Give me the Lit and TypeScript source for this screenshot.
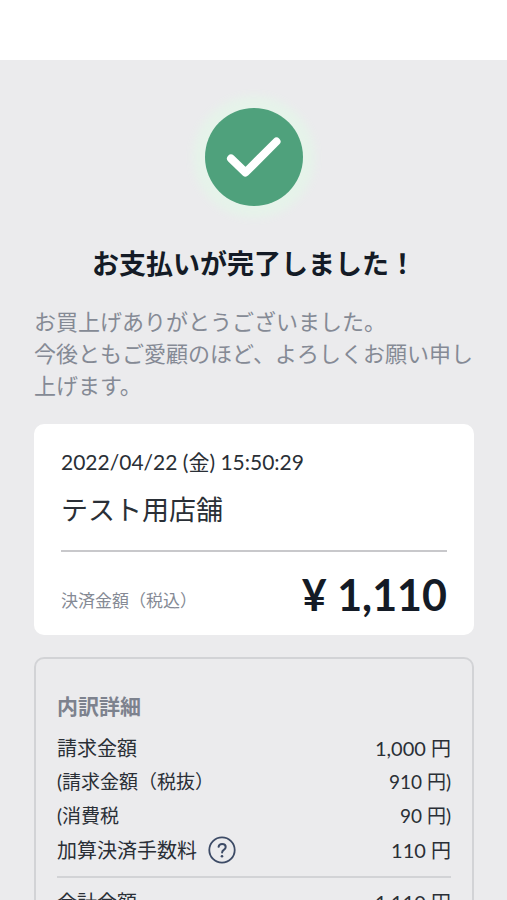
import { LitElement, html, css } from "lit";
import { customElement } from "lit/decorators.js";
import { classMap } from "lit/directives/class-map.js";

interface Line {
  label: string;
  value: string;
  sub?: boolean;
  help?: boolean;
}

const ITEMS: Line[] = [
  { label: "請求金額", value: "1,000 円" },
  { label: "(請求金額（税抜）", value: "910 円)", sub: true },
  { label: "(消費税", value: "90 円)", sub: true },
  { label: "加算決済手数料", value: "110 円", help: true },
];

const TOTAL: Line = { label: "合計金額", value: "1,110 円" };

@customElement("app-root")
export class AppRoot extends LitElement {
  static styles = css`
    :host {
      display: block;
      min-height: 100vh;
      background: #ebebed;
      color: #2a2f36;
      font-family: Lato, "Noto Sans CJK JP", sans-serif;
    }
    * {
      box-sizing: border-box;
    }
    .topbar {
      height: 60px;
      background: #ffffff;
    }
    main {
      display: flex;
      flex-direction: column;
      padding: 48px 33px 48px 34px;
    }
    .badge {
      align-self: center;
      display: block;
      width: 98px;
      height: 98px;
      border-radius: 50%;
      background: #4fa17c;
      box-shadow: 0 0 8px 12px #e6f3ea;
    }
    h1 {
      margin: 38px 0 0;
      text-align: center;
      font-size: 27px;
      line-height: 40px;
      font-weight: 700;
      color: #141b26;
    }
    .thanks {
      margin: 22px 0 0;
      font-size: 22px;
      line-height: 32px;
      color: #858a95;
    }
    .card {
      margin-top: 22px;
      padding: 22px 27px 14px;
      border-radius: 10px;
      background: #ffffff;
    }
    .date {
      margin: 0;
      font-size: 21px;
      line-height: 32px;
    }
    .shop {
      margin: 12px 0 0;
      font-size: 27px;
      line-height: 40px;
    }
    .paid {
      display: flex;
      justify-content: space-between;
      align-items: center;
      margin-top: 20px;
      padding-top: 17px;
      border-top: 2px solid #c8c8cb;
    }
    .paid-label {
      padding-top: 12px;
      font-size: 17px;
      line-height: 32px;
      color: #858a95;
    }
    .paid-sum {
      font-size: 43px;
      line-height: 52px;
      font-weight: 700;
      color: #141b26;
    }
    .detail {
      margin-top: 22px;
      padding: 31px 21px;
      border: 2px solid #d2d3d6;
      border-radius: 10px;
    }
    h2 {
      margin: 0;
      font-size: 21px;
      line-height: 32px;
      font-weight: 700;
      color: #7d828e;
    }
    table {
      width: 100%;
      margin-top: 9px;
      border-collapse: collapse;
    }
    th,
    td {
      height: 34px;
      padding: 0;
      font-size: 20px;
      line-height: 32px;
      font-weight: 400;
      white-space: nowrap;
    }
    th {
      text-align: left;
    }
    td {
      text-align: right;
    }
    .sub th,
    .sub td {
      font-size: 19px;
    }
    .items tr:last-child th,
    .items tr:last-child td {
      height: 44px;
      padding-bottom: 9px;
    }
    .total th,
    .total td {
      height: 48px;
      border-top: 2px solid #d2d3d6;
    }
    .with-help {
      display: flex;
      align-items: center;
      gap: 11px;
    }
    .help {
      display: block;
      width: 28px;
      height: 28px;
      padding: 0;
      border: 0;
      background: none;
      color: #3d4b66;
      cursor: pointer;
    }
    svg {
      display: block;
      width: 100%;
      height: 100%;
    }
  `;

  private row(line: Line) {
    return html`<tr class=${classMap({ sub: !!line.sub })}>
      <th scope="row">
        ${line.help
          ? html`<div class="with-help">
              <span>${line.label}</span>
              <button class="help" type="button" aria-label="加算決済手数料について">
                <svg viewBox="0 0 28 28" fill="none" stroke="currentColor" stroke-linecap="round" stroke-linejoin="round" aria-hidden="true">
                  <circle cx="14" cy="14" r="12.7" stroke-width="1.8" />
                  <path d="M10.6 10.8c.3-1.9 1.7-2.9 3.5-2.9 2 0 3.6 1.2 3.6 3.1 0 1.4-.8 2.2-1.9 2.9-1.2.8-1.7 1.4-1.7 2.7" stroke-width="2" />
                  <circle cx="14" cy="20.2" r="1.3" fill="currentColor" stroke="none" />
                </svg>
              </button>
            </div>`
          : line.label}
      </th>
      <td>${line.value}</td>
    </tr>`;
  }

  render() {
    return html`
      <header class="topbar"></header>
      <main>
        <div class="badge">
          <svg viewBox="0 0 98 98" fill="none" stroke="#ffffff" stroke-width="8" stroke-linecap="round" stroke-linejoin="round" aria-hidden="true">
            <path d="M26 50.5L40.5 64.5L71.5 33.5" />
          </svg>
        </div>
        <h1>お支払いが完了しました！</h1>
        <p class="thanks">
          お買上げありがとうございました。<br />今後ともご愛顧のほど、よろしくお願い申し上げます。
        </p>
        <section class="card">
          <p class="date">2022/04/22 (金) 15:50:29</p>
          <p class="shop">テスト用店舗</p>
          <div class="paid">
            <span class="paid-label">決済金額（税込）</span>
            <span class="paid-sum">¥ 1,110</span>
          </div>
        </section>
        <section class="detail">
          <h2>内訳詳細</h2>
          <table>
            <tbody class="items">
              ${ITEMS.map((line) => this.row(line))}
            </tbody>
            <tbody class="total">
              ${this.row(TOTAL)}
            </tbody>
          </table>
        </section>
      </main>
    `;
  }
}
